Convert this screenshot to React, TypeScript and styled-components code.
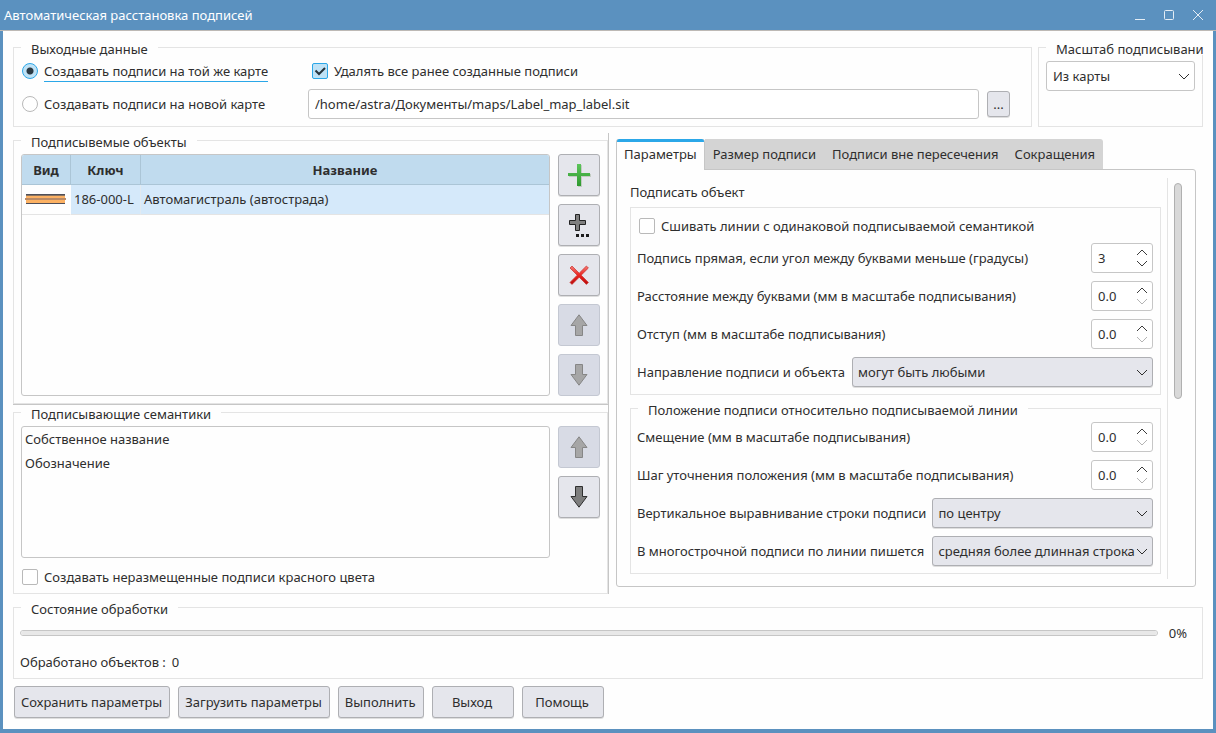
import React, { useState } from "react";
import styled, { createGlobalStyle, css } from "styled-components";

const color = {
  frame: "#5b91bf",
  page: "#fefefe",
  text: "#2e2e2e",
  groupLine: "#e4e4e4",
  line: "#c6c6c6",
  button: "#e5e6ec",
  buttonLine: "#aeafb3",
  disabled: "#d8dbe5",
  disabledLine: "#c4c8d2",
  accent: "#2ba7e8",
  header: "#c0dbee",
  selected: "#d5e9fa",
  tab: "#d4d4d4",
};

const GlobalStyle = createGlobalStyle`
  *, *::before, *::after { box-sizing: border-box; }
  body {
    margin: 0;
    background: ${color.page};
    color: ${color.text};
    font: 13px/18px "Noto Sans", "Liberation Sans", sans-serif;
  }
  button, input, select { font: inherit; color: inherit; margin: 0; }
`;

const Window = styled.div`
  display: flex;
  flex-direction: column;
  min-height: 100vh;
  border: solid ${color.frame};
  border-width: 0 3px 4px;
  background: ${color.page};
`;

const TitleBar = styled.header`
  display: flex;
  align-items: center;
  justify-content: space-between;
  height: 31px;
  margin: 0 -3px;
  padding: 0 11px 0 4px;
  background: ${color.frame};
  border-bottom: 1px solid #bdb9b5;
  color: #fff;
`;

const Title = styled.h1`
  margin: 0;
  font-size: 13px;
  font-weight: 400;
`;

const WindowButtons = styled.div`
  display: flex;
  gap: 15px;
`;

const WindowButton = styled.button`
  display: flex;
  width: 14px;
  height: 14px;
  padding: 0;
  border: 0;
  background: none;
  color: #e4edf5;
`;

const Content = styled.main`
  display: flex;
  flex: 1;
  flex-direction: column;
  padding: 9px 10px 11px;
`;

const Group = styled.fieldset`
  min-width: 0;
  margin: 0;
  padding: 0 7px 7px;
  border: 1px solid ${color.groupLine};
`;

const Legend = styled.legend`
  height: 15px;
  padding: 0 10px;
  background: ${color.page};
  line-height: 19px;
  white-space: nowrap;
`;

const WideLegend = styled(Legend)`
  margin-right: -8px;
  padding-right: 0;
`;

const TopRow = styled.div`
  display: grid;
  grid-template-columns: 1fr 165px;
  gap: 6px;
`;

const OutputGrid = styled.div`
  display: grid;
  grid-template-columns: 287px 1fr;
  grid-template-rows: 26px 30px;
  row-gap: 5px;
  align-items: center;
  padding: 3px 14px 0 0;
`;

const ScaleBody = styled.div`
  padding-top: 6px;
`;

const CheckLabel = styled.label<{ $indent?: number }>`
  display: flex;
  align-items: center;
  gap: 6px;
  height: 19px;
  padding-left: ${(p) => p.$indent ?? 1}px;
`;

const markBase = css`
  appearance: none;
  flex: none;
  width: 16px;
  height: 16px;
  border: 1px solid #b9b9b9;
  background: #fff no-repeat center;
`;

const Radio = styled.input.attrs({ type: "radio" })`
  ${markBase}
  border-radius: 50%;
  &:checked {
    border-color: ${color.accent};
    background: radial-gradient(circle, #2b3a44 0 3px, #bfe2f6 4px);
  }
`;

const CheckBox = styled.input.attrs({ type: "checkbox" })`
  ${markBase}
  border-radius: 2px;
  &:checked {
    border-color: ${color.accent};
    background-color: #bfe2f6;
  }
`;

const CheckHolder = styled.span`
  display: grid;
  flex: none;
  > * { grid-area: 1 / 1; }
  > svg { pointer-events: none; }
`;

const RadioText = styled.span<{ $focused?: boolean }>`
  position: relative;
  &::after {
    content: "";
    display: ${(p) => (p.$focused ? "block" : "none")};
    position: absolute;
    left: 0;
    right: 0;
    bottom: -2px;
    height: 1px;
    background: ${color.accent};
  }
`;

const PathRow = styled.div`
  display: flex;
  align-items: center;
  gap: 8px;
`;

const PathInput = styled.input`
  flex: 1;
  min-width: 0;
  height: 30px;
  padding: 0 6px;
  border: 1px solid ${color.line};
  border-radius: 3px;
  background: #fff;
`;

const buttonLook = css`
  border: 1px solid ${color.buttonLine};
  border-radius: 3px;
  background: ${color.button};
  box-shadow: 0 1px 0 #dedede;
`;

const BrowseButton = styled.button`
  ${buttonLook}
  width: 23px;
  height: 26px;
  padding: 0;
`;

const PushButton = styled.button`
  ${buttonLook}
  min-width: 82px;
  height: 32px;
  padding: 0 7px 0 6px;
  white-space: nowrap;
`;

const ToolButton = styled.button`
  ${buttonLook}
  display: grid;
  place-items: center;
  width: 42px;
  height: 42px;
  padding: 0;
  &:disabled {
    border-color: ${color.disabledLine};
    background: ${color.disabled};
    box-shadow: none;
  }
`;

const ToolColumn = styled.div`
  display: flex;
  flex: none;
  flex-direction: column;
  gap: 8px;
`;

const Middle = styled.div`
  display: grid;
  flex: 1;
  grid-template-columns: 596px 1fr;
  margin: 6px 0;
`;

const LeftPane = styled.div`
  display: flex;
  flex-direction: column;
  border-right: 1px solid ${color.line};
`;

const ObjectsGroup = styled(Group)`
  display: flex;
  flex: 1;
  flex-direction: column;
`;

const Splitter = styled.div`
  height: 1px;
  background: ${color.line};
`;

const ListRow = styled.div`
  display: flex;
  flex: 1;
  gap: 8px;
  padding-top: 6px;
`;

const Frame = styled.div`
  flex: 1;
  overflow: hidden;
  border: 1px solid ${color.line};
  border-radius: 3px;
  background: ${color.page};
`;

const ObjectTable = styled.table`
  width: 100%;
  border-spacing: 0;
  table-layout: fixed;
`;

const Th = styled.th<{ $width?: number }>`
  width: ${(p) => (p.$width ? `${p.$width}px` : "auto")};
  height: 30px;
  padding: 0;
  border-bottom: 1px solid #abc5d6;
  border-right: 1px solid #abc5d6;
  background: ${color.header};
  &:last-child { border-right: 0; }
`;

const Td = styled.td<{ $selected?: boolean }>`
  height: 30px;
  padding: 0 3px 2px;
  border-bottom: 1px solid ${color.groupLine};
  border-right: 1px solid ${(p) => (p.$selected ? "#e2eaf0" : color.page)};
  background: ${(p) => (p.$selected ? color.selected : color.page)};
  white-space: nowrap;
  svg { display: block; }
  &:last-child { border-right: 0; }
`;

const SemanticList = styled.ul`
  height: 130px;
  margin: 0;
  padding: 0 3px;
  list-style: none;
  line-height: 24px;
`;

const RedCheck = styled.div`
  padding-top: 9px;
`;

const RightPane = styled.div`
  display: flex;
  flex-direction: column;
  padding: 6px 7px 7px;
`;

const TabBar = styled.div`
  display: flex;
`;

const Tab = styled.button<{ $active?: boolean }>`
  position: relative;
  height: 31px;
  margin-bottom: -1px;
  padding: 0 8px;
  border: 0;
  border-bottom: 1px solid ${color.line};
  background: ${color.tab};
  white-space: nowrap;
  &:last-child { border-top-right-radius: 3px; }
  ${(p) =>
    p.$active &&
    css`
      padding: 0 7px 1px;
      border: solid ${color.line};
      border-width: 0 1px;
      border-radius: 3px 3px 0 0;
      background: linear-gradient(${color.accent} 3px, ${color.page} 3px);
    `}
`;

const TabPanel = styled.div`
  display: flex;
  flex: 1;
  padding: 8px 13px 7px;
  border: 1px solid ${color.line};
  border-radius: 0 3px 3px 3px;
`;

const Settings = styled.div`
  flex: 1;
  min-width: 0;
  padding: 5px 6px 4px 0;
`;

const ScrollTrack = styled.div`
  padding: 5px 0 0 6px;
  border-left: 1px solid ${color.groupLine};
`;

const ScrollThumb = styled.div`
  width: 8px;
  height: 216px;
  border: 1px solid #b0b0b0;
  border-radius: 4px;
  background: #d9d9d9;
`;

const SectionTitle = styled.h2`
  margin: 0 0 6px;
  font-size: 13px;
  font-weight: 400;
`;

const ObjectSettings = styled.section`
  display: flex;
  flex-direction: column;
  gap: 8px;
  margin-bottom: 6px;
  padding: 8px 7px 7px 6px;
  border: 1px solid ${color.groupLine};
`;

const PositionGroup = styled(Group)`
  padding-left: 6px;
`;

const PositionLegend = styled(Legend)`
  margin-left: 1px;
`;

const PositionGrid = styled.div`
  display: grid;
  grid-template-columns: max-content 1fr;
  gap: 8px 6px;
  align-items: center;
  padding-top: 6px;
`;

const SpinRow = styled.div`
  display: flex;
  grid-column: 1 / -1;
  align-items: center;
  justify-content: space-between;
`;

const SelectRow = styled.div`
  display: flex;
  align-items: center;
  gap: 7px;
`;

const SpinBox = styled.div`
  display: flex;
  width: 62px;
  height: 30px;
  border: 1px solid ${color.line};
  border-radius: 3px;
  background: #fff;
`;

const SpinInput = styled.input`
  flex: 1;
  min-width: 0;
  padding: 0 0 0 6px;
  border: 0;
  background: none;
`;

const SpinArrows = styled.div`
  display: flex;
  flex-direction: column;
  justify-content: center;
  gap: 4px;
  width: 16px;
  margin-right: 2px;
`;

const SpinArrow = styled.button`
  display: flex;
  justify-content: center;
  padding: 0;
  border: 0;
  background: none;
  color: #3c3c3c;
  &:disabled { color: #b4b4b4; }
`;

const SelectBox = styled.div`
  display: grid;
  flex: 1;
  align-items: center;
  min-width: 0;
  > * { grid-area: 1 / 1; }
  > svg {
    justify-self: end;
    margin-right: 5px;
    pointer-events: none;
  }
`;

const SelectInput = styled.select<{ $plain?: boolean }>`
  ${buttonLook}
  appearance: none;
  width: 100%;
  height: 30px;
  padding: 0 14px 0 5px;
  ${(p) =>
    p.$plain &&
    css`
      padding-left: 6px;
      border-color: ${color.line};
      background: #fff;
      box-shadow: none;
    `}
`;

const StatusGroup = styled(Group)`
  padding-left: 6px;
`;

const StatusLegend = styled(Legend)`
  margin-left: 1px;
`;

const StatusBody = styled.div`
  display: flex;
  flex-direction: column;
  gap: 11px;
  padding-top: 9px;
`;

const ProgressRow = styled.div`
  display: flex;
  align-items: center;
  gap: 11px;
  padding-right: 8px;
`;

const Progress = styled.progress`
  appearance: none;
  flex: 1;
  height: 6px;
  overflow: hidden;
  border: 1px solid ${color.line};
  border-radius: 3px;
  background: #e8e8e8;
  &::-webkit-progress-bar { background: #e8e8e8; }
  &::-webkit-progress-value { background: ${color.accent}; }
`;

const Counter = styled.div`
  display: flex;
  gap: 6px;
`;

const Actions = styled.div`
  display: flex;
  gap: 8px;
  padding: 7px 1px 0;
`;

function Chevron({ up = false }: { up?: boolean }) {
  const points = up ? "1,6 6,1 11,6" : "1,1 6,6 11,1";
  return (
    <svg width={12} height={7} viewBox="0 0 12 7" fill="none" stroke="currentColor" strokeWidth="1" aria-hidden="true">
      <polyline points={points} />
    </svg>
  );
}

function ArrowIcon({ down = false, faded = false }: { down?: boolean; faded?: boolean }) {
  return (
    <svg width="20" height="24" viewBox="0 0 20 24" aria-hidden="true">
      <path
        d={
          down
            ? "M6.5 1.5 H13.5 V11.5 H18 L10 22.2 L2 11.5 H6.5 Z"
            : "M10 1.8 L18 12.5 H13.5 V22.5 H6.5 V12.5 H2 Z"
        }
        fill={faded ? "#a6a6a6" : "#7d7d7d"}
        stroke={faded ? "#868686" : "#2f2f2f"}
        strokeWidth="1"
      />
    </svg>
  );
}

function AddIcon() {
  return (
    <svg width="24" height="24" viewBox="0 0 24 24" aria-hidden="true">
      <defs>
        <linearGradient id="addFill" x1="0" y1="0" x2="0" y2="1">
          <stop offset="0" stopColor="#5cc55a" />
          <stop offset="1" stopColor="#2f9a30" />
        </linearGradient>
      </defs>
      <path d="M11 2 H15 V11 H24 V14 H15 V24 H11 V14 H2 V11 H11 Z" fill="#c3cbc3" />
      <path d="M10 1 H14 V10 H23 V13 H14 V23 H10 V13 H1 V10 H10 Z" fill="url(#addFill)" />
    </svg>
  );
}

function AddManyIcon() {
  return (
    <svg width="24" height="24" viewBox="0 0 24 24" aria-hidden="true">
      <path d="M8.5 1.5 H12.5 V7.5 H18.5 V11.5 H12.5 V17.5 H8.5 V11.5 H2.5 V7.5 H8.5 Z" fill="#7f7f7f" stroke="#222" />
      <path d="M9 21 h3 v3 h-3 Z M14 21 h3 v3 h-3 Z M19 21 h3 v3 h-3 Z" fill="#1c1c1c" />
    </svg>
  );
}

function DeleteIcon() {
  return (
    <svg width="24" height="24" viewBox="0 0 24 24" aria-hidden="true">
      <defs>
        <linearGradient id="deleteFill" x1="0" y1="0" x2="0" y2="1">
          <stop offset="0" stopColor="#f47a74" />
          <stop offset=".5" stopColor="#ea2420" />
          <stop offset="1" stopColor="#b80c0c" />
        </linearGradient>
      </defs>
      <path
        d="M5 3 L12.2 10.2 L19.4 3 L21.4 5 L14.2 12.2 L21.4 19.4 L19.4 21.4 L12.2 14.2 L5 21.4 L3 19.4 L10.2 12.2 L3 5 Z"
        fill="url(#deleteFill)"
        stroke="#c8302c"
        strokeWidth=".7"
      />
    </svg>
  );
}

function RoadSample() {
  return (
    <svg width="42" height="10" viewBox="0 0 42 10" shapeRendering="crispEdges" role="img" aria-label="Автомагистраль">
      <rect x="1" width="39" height="10" fill="#fcb163" />
      <rect x="1" width="39" height="1" fill="#4f4f59" />
      <rect x="1" y="1" width="39" height="1" fill="#8a7461" />
      <rect y="4" width="41" height="2" fill="#b98a66" />
      <rect x="1" y="9" width="39" height="1" fill="#4f4f59" />
    </svg>
  );
}

function Check({ id, label, indent, initial = false }: { id: string; label: string; indent?: number; initial?: boolean }) {
  const [checked, setChecked] = useState(initial);
  return (
    <CheckLabel htmlFor={id} $indent={indent}>
      <CheckHolder>
        <CheckBox id={id} checked={checked} onChange={(e) => setChecked(e.target.checked)} />
        {checked && (
          <svg width="16" height="16" viewBox="0 0 16 16" fill="none" stroke="#26333c" strokeWidth="2" aria-hidden="true">
            <polyline points="3.5,7.5 7,11 13,5" />
          </svg>
        )}
      </CheckHolder>
      {label}
    </CheckLabel>
  );
}

function Spin({ id, label, initial, decimals = 0 }: { id: string; label: string; initial: number; decimals?: number }) {
  const [value, setValue] = useState(initial);
  const step = decimals ? 0.1 : 1;
  return (
    <SpinRow>
      <label htmlFor={id}>{label}</label>
      <SpinBox>
        <SpinInput
          id={id}
          inputMode="decimal"
          value={value.toFixed(decimals)}
          onChange={(e) => setValue(Math.max(0, Number(e.target.value) || 0))}
        />
        <SpinArrows>
          <SpinArrow type="button" aria-label="Больше" onClick={() => setValue(value + step)}>
            <Chevron up />
          </SpinArrow>
          <SpinArrow type="button" aria-label="Меньше" disabled={value <= 0} onClick={() => setValue(Math.max(0, value - step))}>
            <Chevron />
          </SpinArrow>
        </SpinArrows>
      </SpinBox>
    </SpinRow>
  );
}

function Select({ id, value, plain, label }: { id: string; value: string; plain?: boolean; label?: string }) {
  return (
    <SelectBox>
      <SelectInput id={id} $plain={plain} aria-label={label} defaultValue={value}>
        <option>{value}</option>
      </SelectInput>
      <Chevron />
    </SelectBox>
  );
}

const tabs = ["Параметры", "Размер подписи", "Подписи вне пересечения", "Сокращения"];
const actions = ["Сохранить параметры", "Загрузить параметры", "Выполнить", "Выход", "Помощь"];

export default function App() {
  const [target, setTarget] = useState("same");
  const [tab, setTab] = useState(0);
  const [path, setPath] = useState("/home/astra/Документы/maps/Label_map_label.sit");

  return (
    <Window>
      <GlobalStyle />
      <TitleBar>
        <Title>Автоматическая расстановка подписей</Title>
        <WindowButtons>
          <WindowButton aria-label="Свернуть">
            <svg width="14" height="14" viewBox="0 0 14 14" stroke="currentColor"><path d="M2 11.5 H12" /></svg>
          </WindowButton>
          <WindowButton aria-label="Развернуть">
            <svg width="14" height="14" viewBox="0 0 14 14" fill="none" stroke="currentColor"><rect x="2.5" y="2.5" width="9" height="9" rx="1" /></svg>
          </WindowButton>
          <WindowButton aria-label="Закрыть">
            <svg width="14" height="14" viewBox="0 0 14 14" stroke="currentColor"><path d="M2 2 L12 12 M12 2 L2 12" /></svg>
          </WindowButton>
        </WindowButtons>
      </TitleBar>

      <Content>
        <TopRow>
          <Group>
            <Legend>Выходные данные</Legend>
            <OutputGrid>
              <CheckLabel>
                <Radio name="target" checked={target === "same"} onChange={() => setTarget("same")} />
                <RadioText $focused={target === "same"}>Создавать подписи на той же карте</RadioText>
              </CheckLabel>
              <Check id="purge" label="Удалять все ранее созданные подписи" indent={4} initial />
              <CheckLabel>
                <Radio name="target" checked={target === "new"} onChange={() => setTarget("new")} />
                <RadioText $focused={target === "new"}>Создавать подписи на новой карте</RadioText>
              </CheckLabel>
              <PathRow>
                <PathInput aria-label="Путь к карте" value={path} onChange={(e) => setPath(e.target.value)} />
                <BrowseButton aria-label="Обзор">...</BrowseButton>
              </PathRow>
            </OutputGrid>
          </Group>
          <Group>
            <WideLegend>Масштаб подписывани</WideLegend>
            <ScaleBody>
              <Select id="scale" value="Из карты" label="Масштаб" plain />
            </ScaleBody>
          </Group>
        </TopRow>

        <Middle>
          <LeftPane>
            <ObjectsGroup>
              <Legend>Подписывемые объекты</Legend>
              <ListRow>
                <Frame>
                  <ObjectTable>
                    <thead>
                      <tr>
                        <Th $width={49}>Вид</Th>
                        <Th $width={70}>Ключ</Th>
                        <Th>Название</Th>
                      </tr>
                    </thead>
                    <tbody>
                      <tr>
                        <Td><RoadSample /></Td>
                        <Td $selected>186-000-L</Td>
                        <Td $selected>Автомагистраль (автострада)</Td>
                      </tr>
                    </tbody>
                  </ObjectTable>
                </Frame>
                <ToolColumn>
                  <ToolButton aria-label="Добавить"><AddIcon /></ToolButton>
                  <ToolButton aria-label="Добавить несколько"><AddManyIcon /></ToolButton>
                  <ToolButton aria-label="Удалить"><DeleteIcon /></ToolButton>
                  <ToolButton aria-label="Объект выше" disabled><ArrowIcon faded /></ToolButton>
                  <ToolButton aria-label="Объект ниже" disabled><ArrowIcon down faded /></ToolButton>
                </ToolColumn>
              </ListRow>
            </ObjectsGroup>
            <Splitter />
            <Group>
              <Legend>Подписывающие семантики</Legend>
              <ListRow>
                <Frame>
                  <SemanticList>
                    <li>Собственное название</li>
                    <li>Обозначение</li>
                  </SemanticList>
                </Frame>
                <ToolColumn>
                  <ToolButton aria-label="Семантика выше" disabled><ArrowIcon faded /></ToolButton>
                  <ToolButton aria-label="Семантика ниже"><ArrowIcon down /></ToolButton>
                </ToolColumn>
              </ListRow>
              <RedCheck>
                <Check id="red" label="Создавать неразмещенные подписи красного цвета" />
              </RedCheck>
            </Group>
          </LeftPane>

          <RightPane>
            <TabBar role="tablist">
              {tabs.map((name, i) => (
                <Tab key={name} role="tab" aria-selected={i === tab} $active={i === tab} onClick={() => setTab(i)}>
                  {name}
                </Tab>
              ))}
            </TabBar>
            <TabPanel role="tabpanel">
              <Settings>
                <SectionTitle>Подписать объект</SectionTitle>
                <ObjectSettings>
                  <Check id="join" label="Сшивать линии с одинаковой подписываемой семантикой" indent={2} />
                  <Spin id="angle" label="Подпись прямая, если угол между буквами меньше (градусы)" initial={3} />
                  <Spin id="letters" label="Расстояние между буквами (мм в масштабе подписывания)" initial={0} decimals={1} />
                  <Spin id="indent" label="Отступ (мм в масштабе подписывания)" initial={0} decimals={1} />
                  <SelectRow>
                    <label htmlFor="direction">Направление подписи и объекта</label>
                    <Select id="direction" value="могут быть любыми" />
                  </SelectRow>
                </ObjectSettings>
                <PositionGroup>
                  <PositionLegend>Положение подписи относительно подписываемой линии</PositionLegend>
                  <PositionGrid>
                    <Spin id="shift" label="Смещение (мм в масштабе подписывания)" initial={0} decimals={1} />
                    <Spin id="step" label="Шаг уточнения положения (мм в масштабе подписывания)" initial={0} decimals={1} />
                    <label htmlFor="valign">Вертикальное выравнивание строки подписи</label>
                    <Select id="valign" value="по центру" />
                    <label htmlFor="multi">В многострочной подписи по линии пишется</label>
                    <Select id="multi" value="средняя более длинная строка" />
                  </PositionGrid>
                </PositionGroup>
              </Settings>
              <ScrollTrack>
                <ScrollThumb />
              </ScrollTrack>
            </TabPanel>
          </RightPane>
        </Middle>

        <StatusGroup>
          <StatusLegend>Состояние обработки</StatusLegend>
          <StatusBody>
            <ProgressRow>
              <Progress value={0} max={100} aria-label="Ход обработки" />
              <span>0%</span>
            </ProgressRow>
            <Counter>
              <span>Обработано объектов :</span>
              <span>0</span>
            </Counter>
          </StatusBody>
        </StatusGroup>

        <Actions>
          {actions.map((name) => (
            <PushButton key={name}>{name}</PushButton>
          ))}
        </Actions>
      </Content>
    </Window>
  );
}
